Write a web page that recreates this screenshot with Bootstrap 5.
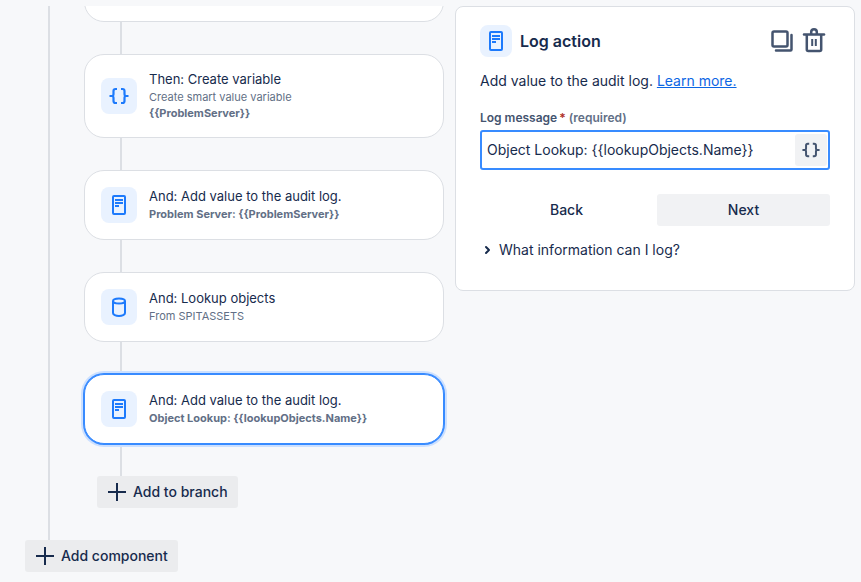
<!DOCTYPE html>
<html lang="en">
<head>
<meta charset="utf-8">
<meta name="viewport" content="width=device-width, initial-scale=1">
<title>Automation rule</title>
<link href="https://cdn.jsdelivr.net/npm/bootstrap@5.3.0/dist/css/bootstrap.min.css" rel="stylesheet">
<style>
  body { background: #f7f8fa; color: #172b4d; font-family: Inter, "Noto Sans", sans-serif; font-size: 14px; line-height: 20px; }
  .editor { padding: 6px 6px 0 0; gap: 11px; }
  .flow { flex: 0 0 444px; }
  .trunk { margin-left: 48px; padding: 0 0 32px 34px; border-left: 2px solid #dcdfe4; }
  .step-clip { height: 16px; }
  .step { padding: 16px; gap: 12px; background: #fff; border: 1px solid #dcdfe4; border-radius: 20px; }
  .step-past { flex: 0 0 70px; }
  .step-active { border-color: #388bff; box-shadow: 0 0 0 1px #388bff, 0 0 0 3px #cce0ff; }
  .link-line { width: 2px; height: 32px; margin-left: 36px; background: #dcdfe4; }
  .tile { flex: none; width: 36px; height: 36px; border-radius: 8px; background: #e9f2ff; color: #1d7afc; }
  .tile-sm { width: 32px; height: 32px; }
  .step-title { font-size: 13px; line-height: 16px; padding-bottom: 2px; }
  .step-note { font-size: 11px; line-height: 16px; color: #626f86; }
  .btn-flat { --bs-btn-color: #172b4d; --bs-btn-hover-color: #172b4d; --bs-btn-bg: #ebecee; --bs-btn-hover-bg: #dcdfe4; --bs-btn-border-width: 0; --bs-btn-border-radius: 3px; --bs-btn-font-size: 14px; --bs-btn-line-height: 20px; --bs-btn-font-weight: 500; --bs-btn-padding-x: 12px; --bs-btn-padding-y: 6px; }
  .btn-add { --bs-btn-padding-x: 10px; gap: 6px; }
  .btn-branch { margin-left: 13px; }
  .btn-component { margin-left: 25px; }
  .btn-next, .btn-value { --bs-btn-bg: #f1f2f4; }
  .btn-back { --bs-btn-bg: #fff; }
  .btn-tool { --bs-btn-bg: transparent; --bs-btn-padding-x: 0; --bs-btn-padding-y: 0; }
  .panel { min-width: 0; padding: 18px 24px 30px; background: #fff; border: 1px solid #dcdfe4; border-radius: 8px; }
  .panel-head { padding-right: 4px; }
  .panel-head svg { overflow: visible; }
  .panel-title { font-size: 16px; line-height: 24px; }
  .intro { margin: 14px 0 19px; }
  .intro a { color: #0c66e4; }
  .field-label { margin-bottom: 4px; font-size: 12px; line-height: 16px; font-weight: 600; color: #44546f; }
  .field-label .need { color: #ae2e24; padding-left: 2px; }
  .field-label .hint { color: #626f86; }
  .field { height: 40px; padding: 0 1px 0 5px; border: 2px solid #388bff; border-radius: 3px; }
  .field input { min-width: 0; color: #172b4d; outline: 0; }
  .btn-value { --bs-btn-color: #44546f; --bs-btn-padding-x: 7px; --bs-btn-padding-y: 7px; }
  .nav-row { margin: 24px 0 14px; gap: 4px; }
  .btn-more { --bs-btn-bg: transparent; --bs-btn-padding-x: 0; --bs-btn-padding-y: 0; --bs-btn-font-weight: 400; gap: 3px; }
</style>
<script src="https://cdn.jsdelivr.net/npm/bootstrap@5.3.0/dist/js/bootstrap.bundle.min.js"></script>
</head>
<body>
<svg class="d-none" aria-hidden="true">
  <symbol id="i-log" viewBox="0 0 20 20"><rect x="4" y="1" width="12" height="18" rx="1" fill="none" stroke="currentColor" stroke-width="2"/><path d="M6 5h8M6 8h8M6 11h4" stroke="currentColor" stroke-width="2"/></symbol>
  <symbol id="i-braces" viewBox="0 0 20 20"><path d="M8 3H6.500Q4.500 3 4.500 5V8Q4.500 10 3 10H0.500M3 10Q4.500 10 4.500 12V15Q4.500 17 6.500 17H8M12 3h1.500Q15.500 3 15.500 5V8Q15.500 10 17 10h2.500M17 10Q15.500 10 15.500 12V15Q15.500 17 13.500 17H12" fill="none" stroke="currentColor" stroke-width="2.200"/></symbol>
  <symbol id="i-db" viewBox="0 0 20 20"><path d="M4 4v12c0 1.600 2.700 3 6 3s6-1.400 6-3V4" fill="none" stroke="currentColor" stroke-width="2"/><ellipse cx="10" cy="4" rx="6" ry="2.600" fill="none" stroke="currentColor" stroke-width="2"/></symbol>
  <symbol id="i-plus" viewBox="0 0 20 20"><path d="M10 1v18M1 10h18" stroke="currentColor" stroke-width="2"/></symbol>
</svg>
<main class="editor d-flex align-items-start">
  <section class="flow" aria-label="Rule steps">
    <div class="trunk">
      <div class="step-clip overflow-hidden d-flex flex-column justify-content-end"><div class="step step-past"></div></div>
      <div class="link-line"></div>
      <article class="step d-flex align-items-center">
        <span class="tile d-flex align-items-center justify-content-center"><svg width="20" height="20"><use href="#i-braces"/></svg></span>
        <div><div class="step-title">Then: Create variable</div><div class="step-note">Create smart value variable</div><div class="step-note fw-bold">{{ProblemServer}}</div></div>
      </article>
      <div class="link-line"></div>
      <article class="step d-flex align-items-center">
        <span class="tile d-flex align-items-center justify-content-center"><svg width="20" height="20"><use href="#i-log"/></svg></span>
        <div><div class="step-title">And: Add value to the audit log.</div><div class="step-note fw-bold">Problem Server: {{ProblemServer}}</div></div>
      </article>
      <div class="link-line"></div>
      <article class="step d-flex align-items-center">
        <span class="tile d-flex align-items-center justify-content-center"><svg width="20" height="20"><use href="#i-db"/></svg></span>
        <div><div class="step-title">And: Lookup objects</div><div class="step-note">From SPITASSETS</div></div>
      </article>
      <div class="link-line"></div>
      <article class="step step-active position-relative d-flex align-items-center">
        <span class="tile d-flex align-items-center justify-content-center"><svg width="20" height="20"><use href="#i-log"/></svg></span>
        <div><div class="step-title">And: Add value to the audit log.</div><div class="step-note fw-bold">Object Lookup: {{lookupObjects.Name}}</div></div>
      </article>
      <div class="link-line"></div>
      <button type="button" class="btn btn-flat btn-add btn-branch d-flex align-items-center"><svg width="20" height="20"><use href="#i-plus"/></svg>Add to branch</button>
    </div>
    <button type="button" class="btn btn-flat btn-add btn-component d-flex align-items-center"><svg width="20" height="20"><use href="#i-plus"/></svg>Add component</button>
  </section>

  <aside class="panel flex-grow-1">
    <header class="panel-head d-flex align-items-center gap-2">
      <span class="tile tile-sm d-flex align-items-center justify-content-center"><svg width="20" height="20"><use href="#i-log"/></svg></span>
      <h1 class="panel-title fw-semibold mb-0 me-auto">Log action</h1>
      <button type="button" class="btn btn-flat btn-tool d-flex" aria-label="Duplicate"><svg width="24" height="24" fill="none" stroke="#44546f"><rect x="2.500" y="2.500" width="15" height="15" rx="1.500" stroke-width="2.500"/><path d="M21.500 6v14.500q0 1-1 1H6" stroke-width="2.500" stroke-linecap="round"/></svg></button>
      <button type="button" class="btn btn-flat btn-tool d-flex" aria-label="Delete"><svg width="24" height="24" fill="none" stroke="#44546f" stroke-width="2.500"><path d="M2 5.500h20" stroke-linecap="round"/><path d="M4.800 6v14.500q0 1.500 1.500 1.500h11.400q1.500 0 1.500-1.500V6M9.200 5V3q0-2.800 2.800-2.800T14.800 3v2"/><path d="M10.200 10v7M13.800 10v7" stroke-width="2"/></svg></button>
    </header>
    <p class="intro">Add value to the audit log. <a href="#">Learn more.</a></p>
    <form>
      <label class="field-label d-block" for="msg">Log message<span class="need">*</span> <span class="hint">(required)</span></label>
      <div class="field d-flex align-items-center">
        <input id="msg" type="text" class="flex-grow-1 border-0 bg-transparent p-0" value="Object Lookup: {{lookupObjects.Name}}">
        <button type="button" class="btn btn-flat btn-value d-flex" aria-label="Insert smart value"><svg width="18" height="18"><use href="#i-braces"/></svg></button>
      </div>
      <div class="nav-row d-flex">
        <button type="button" class="btn btn-flat btn-back w-50">Back</button>
        <button type="button" class="btn btn-flat btn-next w-50">Next</button>
      </div>
      <button type="button" class="btn btn-flat btn-more d-flex align-items-center"><svg width="16" height="16" fill="none" stroke="#172b4d" stroke-width="2"><path d="M6 5l3 3-3 3" stroke-linecap="round" stroke-linejoin="round"/></svg>What information can I log?</button>
    </form>
  </aside>
</main>
</body>
</html>
